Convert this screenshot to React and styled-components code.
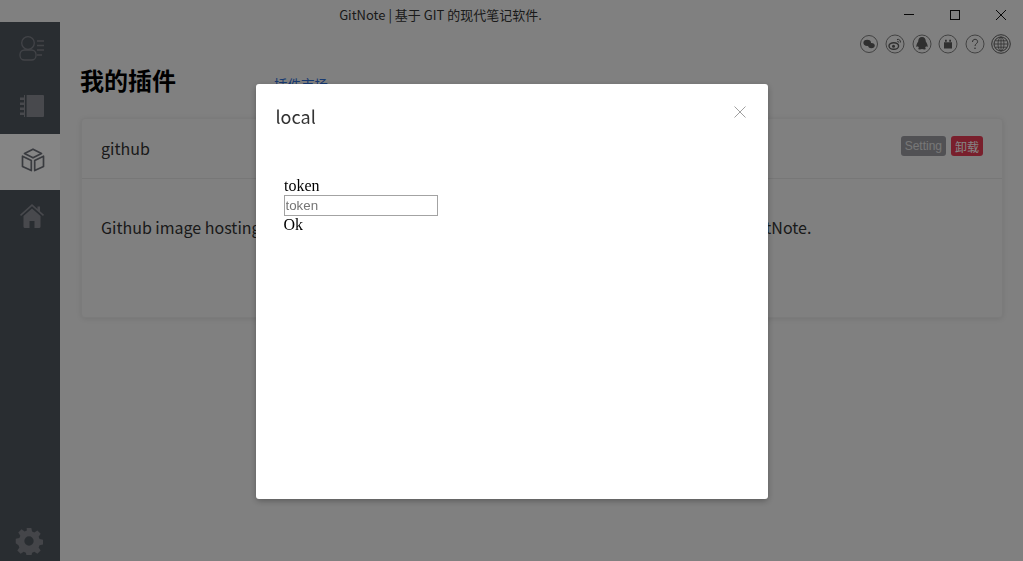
import React from "react";
import styled, { createGlobalStyle } from "styled-components";

const GlobalStyle = createGlobalStyle`
  html, body {
    margin: 0;
    padding: 0;
    height: 100%;
    overflow: hidden;
    background: #f6f6f6;
    font-family: "Noto Sans CJK SC", "Noto Sans", sans-serif;
  }
`;

const Shell = styled.div`
  display: flex;
  flex-direction: column;
  height: 561px;
  width: 1023px;
  overflow: hidden;
`;

const TitleBar = styled.header`
  display: flex;
  align-items: center;
  height: 22px;
  flex: none;
`;

const AppTitle = styled.div`
  flex: 1;
  padding: 8px 5px 0 0;
  text-align: center;
  font-size: 13px;
  line-height: 14px;
  color: #333;
`;

const WindowControls = styled.div`
  display: flex;
  flex: none;
  padding-top: 8px;
  margin-right: -1px;
`;

const WindowButton = styled.div`
  display: flex;
  align-items: center;
  justify-content: center;
  width: 46px;
  height: 14px;
  color: #111;
`;

const Body = styled.div`
  display: flex;
  flex: 1;
  min-height: 0;
`;

const Sidebar = styled.nav`
  display: flex;
  flex-direction: column;
  flex: none;
  width: 60px;
  background: #50565f;
`;

const SideItem = styled.div`
  display: flex;
  align-items: center;
  justify-content: center;
  height: 56px;
  background: ${(p) => (p.$active ? "#fff" : "transparent")};
  color: ${(p) => (p.$active ? "#6e717a" : "#8a8d94")};
`;

const SideIcon = styled.svg`
  flex: none;
  margin-left: ${(p) => p.$left || 0}px;
  margin-bottom: ${(p) => p.$bottom || 0}px;
`;

const SideFooter = styled.div`
  display: flex;
  justify-content: center;
  margin-top: auto;
  padding: 0 2px 6px 0;
  color: #82858c;
`;

const Content = styled.main`
  flex: 1;
  display: flex;
  flex-direction: column;
  min-width: 0;
  padding: 0 20px 0 21px;
`;

const SocialRow = styled.div`
  display: flex;
  justify-content: flex-end;
  gap: 6.5px;
  height: 20px;
  padding-top: 12px;
  margin-right: -8px;
`;

const SocialIcon = styled.svg`
  width: 20px;
  height: 20px;
  color: #5c5c5c;
`;

const HeadingRow = styled.div`
  display: flex;
  align-items: baseline;
  gap: 98px;
  height: 56px;
  padding-top: 8px;
`;

const Heading = styled.h1`
  margin: 0 0 0 -1px;
  font-size: 24px;
  line-height: 36px;
  font-weight: 700;
  color: #000;
`;

const MarketLink = styled.a`
  font-size: 13.5px;
  color: #2f6fd8;
`;

const Card = styled.section`
  height: 200px;
  box-sizing: border-box;
  border: 1px solid #ececec;
  border-radius: 4px;
  box-shadow: 0 1px 6px rgba(0, 0, 0, 0.1);
  background: #f6f6f6;
`;

const CardHeader = styled.div`
  display: flex;
  align-items: center;
  justify-content: space-between;
  box-sizing: border-box;
  height: 60px;
  padding: 0 19px 1px;
  border-bottom: 1px solid #e4e4e4;
`;

const CardTitle = styled.span`
  font-size: 16px;
  color: #333;
`;

const Actions = styled.div`
  display: flex;
  gap: 5px;
  margin-bottom: 4px;
`;

const Tag = styled.span`
  display: flex;
  align-items: center;
  height: 20px;
  padding: 0 4px;
  border-radius: 3px;
  font-family: "Liberation Sans", "Noto Sans CJK SC", sans-serif;
  font-size: 12px;
  color: ${(p) => p.$ink};
  background: ${(p) => p.$bg};
`;

const CardText = styled.p`
  margin: 0;
  padding: 36px 19px;
  font-size: 16px;
  line-height: 24px;
  color: #333;
  white-space: nowrap;
`;

const Overlay = styled.div`
  position: fixed;
  inset: 0;
  display: flex;
  justify-content: center;
  align-items: flex-start;
  padding-top: 84px;
  background: rgba(0, 0, 0, 0.48);
`;

const Modal = styled.div`
  display: flex;
  flex-direction: column;
  width: 512px;
  height: 415px;
  border-radius: 3px;
  background: #fff;
  box-shadow: 0 2px 6px rgba(0, 0, 0, 0.3);
`;

const ModalHead = styled.div`
  display: flex;
  align-items: flex-start;
  justify-content: space-between;
  padding: 19px 22px 0 20px;
  height: 73px;
  box-sizing: border-box;
`;

const ModalTitle = styled.div`
  font-size: 18px;
  line-height: 26px;
  color: #333;
`;

const CloseIcon = styled.svg`
  width: 12px;
  height: 12px;
  margin: 3px 0 0;
  color: #a0a0a0;
`;

const Form = styled.form`
  display: flex;
  flex-direction: column;
  align-items: flex-start;
  padding: 20px 28px;
  font-family: "Liberation Serif", serif;
  font-size: 16px;
  line-height: 18px;
  color: #000;
`;

const FieldLabel = styled.label`
  display: block;
  margin-left: 0.5px;
`;

const TextInput = styled.input`
  box-sizing: border-box;
  width: 154px;
  height: 21px;
  padding: 1px;
  border: 1px solid #a3a3a3;
  outline: none;
  font-family: "Liberation Sans", sans-serif;
  font-size: 13.33px;
  &::placeholder {
    color: #757575;
  }
`;

const Submit = styled.span`
  display: block;
`;

const Ring = ({ r = 9 }) => <circle cx="10" cy="10" r={r} fill="none" stroke="#707070" strokeWidth=".9" />;

const socials = [
  <>
    <Ring r={8.5} />
    <ellipse cx="8.2" cy="8.8" rx="3.8" ry="3.1" fill="currentColor" />
    <ellipse cx="12.4" cy="11.6" rx="3.3" ry="2.7" fill="currentColor" />
  </>,
  <>
    <Ring />
    <ellipse cx="8.8" cy="12" rx="4.8" ry="3.3" fill="none" stroke="currentColor" strokeWidth="1.4" />
    <circle cx="8.5" cy="12.2" r="1.5" fill="currentColor" />
    <path d="M12 5.500c2-.7 3.800.8 3.400 3M12.200 7.400c.9-.3 1.700.4 1.500 1.200" fill="none" stroke="currentColor" />
  </>,
  <>
    <Ring />
    <path d="M10 3c2.600 0 3.800 2 3.800 4.400 1.400 2 2.200 3.800 1.700 5.600-.5.2-1-.3-1.400-.9-.2.8-.6 1.400-1.100 1.800.6.3 1 .7.9 1.100-.3.5-2.600.5-3.900 0-1.300.5-3.600.5-3.900 0-.1-.4.300-.8.900-1.100-.5-.4-.9-1-1.100-1.800-.4.600-.9 1.100-1.400.9-.5-1.800.3-3.600 1.700-5.600C6.200 5 7.400 3 10 3z" fill="currentColor" />
  </>,
  <>
    <Ring />
    <path d="M6 8.200h8v6.300H6zM7 5.800h1.800v2H7zM11.200 5.800H13v2h-1.800z" fill="currentColor" />
  </>,
  <>
    <Ring />
    <path d="M7.500 8c0-1.700 1.100-2.700 2.600-2.700S12.600 6.300 12.600 7.700c0 1.900-2.600 2.100-2.600 4.300" fill="none" stroke="currentColor" strokeWidth="1" />
    <circle cx="10" cy="14.300" r=".8" fill="currentColor" />
  </>,
  <>
    <circle cx="10" cy="10" r="9.300" fill="none" stroke="currentColor" strokeWidth="1" />
    <circle cx="10" cy="10" r="7" fill="none" stroke="currentColor" strokeWidth="1" />
    <ellipse cx="10" cy="10" rx="3" ry="7" fill="none" stroke="currentColor" strokeWidth=".8" />
    <path d="M3 10h14M4 6.800h12M4 13.200h12M10 3v14" stroke="currentColor" strokeWidth=".8" />
  </>,
];

export default function App() {
  return (
    <>
      <GlobalStyle />
      <Shell>
        <TitleBar>
          <AppTitle>GitNote | 基于 GIT 的现代笔记软件.</AppTitle>
          <WindowControls>
            <WindowButton>
              <svg width="10" height="10" viewBox="0 0 10 10">
                <path d="M0 4.500h10" stroke="currentColor" />
              </svg>
            </WindowButton>
            <WindowButton>
              <svg width="10" height="10" viewBox="0 0 10 10">
                <rect x=".5" y=".5" width="9" height="9" fill="none" stroke="currentColor" />
              </svg>
            </WindowButton>
            <WindowButton>
              <svg width="10" height="10" viewBox="0 0 10 10">
                <path d="M0 0l10 10M10 0L0 10" stroke="currentColor" />
              </svg>
            </WindowButton>
          </WindowControls>
        </TitleBar>
        <Body>
          <Sidebar>
            <SideItem>
              <SideIcon width="26" height="28" viewBox="0 0 26 28" $left={4} fill="none" stroke="currentColor" strokeWidth="1.300" opacity=".8">
                <circle cx="9" cy="7" r="6.300" />
                <rect x="1" y="14" width="16" height="10" rx="4.500" />
                <path d="M18 5h7M18 9.500h7M18 14h7M18 19h5" />
              </SideIcon>
            </SideItem>
            <SideItem>
              <SideIcon width="24" height="24" viewBox="0 0 24 24" $left={4} fill="currentColor">
                <path d="M4 1h19a1 1 0 0 1 1 1v20a1 1 0 0 1-1 1H4z" />
                <path d="M0 3.500h6v2.500H0zM0 8.500h6V11H0zM0 13.500h6V16H0zM0 18.500h6V21H0z" />
                <path d="M5 1h1.600v22H5z" fill="#50565f" />
              </SideIcon>
            </SideItem>
            <SideItem $active>
              <SideIcon width="24" height="24" viewBox="0 0 24 24" $left={6} $bottom={4} fill="none" stroke="currentColor" strokeWidth="1.700" strokeLinejoin="round">
                <path d="M12 1.200l8.500 4.300L12 9.800 3.500 5.500z" />
                <path d="M1.500 8.200l8.800 4.400v10L1.500 18.400z" />
                <path d="M22.500 8.200l-8.800 4.400v10l8.800-4.200z" />
              </SideIcon>
            </SideItem>
            <SideItem>
              <SideIcon width="24" height="24" viewBox="0 0 24 24" $left={4} $bottom={4} fill="currentColor">
                <path d="M12 0L0 10.800l1 1.200L12 2.300l11 9.700 1-1.200-4-3.600V2.500h-2.500v2.500z" />
                <path d="M12 4.500L3.500 12v10.500A1.500 1.500 0 0 0 5 24h4.500v-7h5v7H19a1.500 1.500 0 0 0 1.500-1.500V12z" />
              </SideIcon>
            </SideItem>
            <SideFooter>
              <svg width="28" height="28" viewBox="0 0 30 30" fill="currentColor">
                <path fillRule="evenodd" d="M12.500 1h5l.8 3.900 2.400 1 3.300-2.200 3.500 3.500-2.200 3.300 1 2.400 3.900.8v5l-3.900.8-1 2.400 2.200 3.300-3.500 3.500-3.300-2.200-2.400 1-.8 3.900h-5l-.8-3.900-2.400-1-3.300 2.200-3.500-3.500 2.200-3.300-1-2.400L.800 17.500v-5l3.900-.8 1-2.400-2.200-3.300 3.500-3.500 3.300 2.200 2.400-1zM15 10a5 5 0 1 0 0 10 5 5 0 0 0 0-10z" />
              </svg>
            </SideFooter>
          </Sidebar>
          <Content>
            <SocialRow>
              {socials.map((icon, i) => (
                <SocialIcon key={i} viewBox="0 0 20 20">
                  {icon}
                </SocialIcon>
              ))}
            </SocialRow>
            <HeadingRow>
              <Heading>我的插件</Heading>
              <MarketLink>插件市场</MarketLink>
            </HeadingRow>
            <Card>
              <CardHeader>
                <CardTitle>github</CardTitle>
                <Actions>
                  <Tag $bg="#9c9ca2" $ink="#e4e4e4">Setting</Tag>
                  <Tag $bg="#e83c55" $ink="#fff">卸载</Tag>
                </Actions>
              </CardHeader>
              <CardText>Github image hosting plugin, you can upload pictures to this Github repository through GitNote.</CardText>
            </Card>
          </Content>
        </Body>
      </Shell>
      <Overlay>
        <Modal>
          <ModalHead>
            <ModalTitle>local</ModalTitle>
            <CloseIcon viewBox="0 0 12 12">
              <path d="M.5.500l11 11M11.500.500l-11 11" stroke="currentColor" fill="none" />
            </CloseIcon>
          </ModalHead>
          <Form>
            <FieldLabel>token</FieldLabel>
            <TextInput placeholder="token" />
            <Submit>Ok</Submit>
          </Form>
        </Modal>
      </Overlay>
    </>
  );
}
